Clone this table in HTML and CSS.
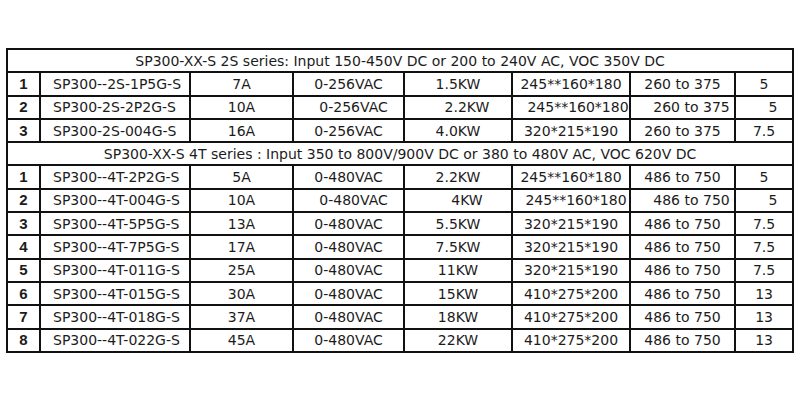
FILE: index.html
```html
<!DOCTYPE html>
<html>
<head>
<meta charset="utf-8">
<link rel="stylesheet" href="styles.css">
</head>
<body>
<div class="page">
<table class="spec">
<colgroup>
<col class="c-no"><col class="c-model"><col class="c-amp"><col class="c-volt"><col class="c-kw"><col class="c-size"><col class="c-range"><col class="c-kg">
</colgroup>
<tbody>
<tr class="series"><td colspan="8">SP300-XX-S 2S series: Input 150-450V DC or 200 to 240V AC, VOC 350V DC</td></tr>
<tr><td class="no">1</td><td class="model">SP300--2S-1P5G-S</td><td>7A</td><td>0-256VAC</td><td>1.5KW</td><td>245**160*180</td><td>260 to 375</td><td>5</td></tr>
<tr class="shifted"><td class="no">2</td><td class="model">SP300-2S-2P2G-S</td><td>10A</td><td class="s1">0-256VAC</td><td class="s2">2.2KW</td><td class="s3">245**160*180</td><td class="s2">260 to 375</td><td class="s2">5</td></tr>
<tr><td class="no">3</td><td class="model">SP300-2S-004G-S</td><td>16A</td><td>0-256VAC</td><td>4.0KW</td><td>320*215*190</td><td>260 to 375</td><td>7.5</td></tr>
<tr class="series"><td colspan="8">SP300-XX-S 4T series : Input 350 to 800V/900V DC or 380 to 480V AC, VOC 620V DC</td></tr>
<tr><td class="no">1</td><td class="model">SP300--4T-2P2G-S</td><td>5A</td><td>0-480VAC</td><td>2.2KW</td><td>245**160*180</td><td>486 to 750</td><td>5</td></tr>
<tr class="shifted"><td class="no">2</td><td class="model">SP300--4T-004G-S</td><td>10A</td><td class="s1">0-480VAC</td><td class="s2">4KW</td><td class="s1">245**160*180</td><td class="s2">486 to 750</td><td class="s2">5</td></tr>
<tr><td class="no">3</td><td class="model">SP300--4T-5P5G-S</td><td>13A</td><td>0-480VAC</td><td>5.5KW</td><td>320*215*190</td><td>486 to 750</td><td>7.5</td></tr>
<tr><td class="no">4</td><td class="model">SP300--4T-7P5G-S</td><td>17A</td><td>0-480VAC</td><td>7.5KW</td><td>320*215*190</td><td>486 to 750</td><td>7.5</td></tr>
<tr><td class="no">5</td><td class="model">SP300--4T-011G-S</td><td>25A</td><td>0-480VAC</td><td>11KW</td><td>320*215*190</td><td>486 to 750</td><td>7.5</td></tr>
<tr><td class="no">6</td><td class="model">SP300--4T-015G-S</td><td>30A</td><td>0-480VAC</td><td>15KW</td><td>410*275*200</td><td>486 to 750</td><td>13</td></tr>
<tr><td class="no">7</td><td class="model">SP300--4T-018G-S</td><td>37A</td><td>0-480VAC</td><td>18KW</td><td>410*275*200</td><td>486 to 750</td><td>13</td></tr>
<tr><td class="no">8</td><td class="model">SP300--4T-022G-S</td><td>45A</td><td>0-480VAC</td><td>22KW</td><td>410*275*200</td><td>486 to 750</td><td>13</td></tr>
</tbody>
</table>
</div>
</body>
</html>
```

FILE: styles.css
```css
html, body {
  margin: 0;
  padding: 0;
  background: #ffffff;
}

.page {
  width: 800px;
  height: 400px;
  padding: 48px 0 0 6px;
  box-sizing: border-box;
}

.spec {
  border-collapse: collapse;
  table-layout: fixed;
  width: 786px;
  font-family: "DejaVu Sans", "Liberation Sans", sans-serif;
  font-size: 14px;
  color: #1c1c1c;
}

.c-no { width: 33px; }
.c-model { width: 150px; }
.c-amp { width: 103px; }
.c-volt { width: 111px; }
.c-kw { width: 108px; }
.c-size { width: 118px; }
.c-range { width: 105px; }
.c-kg { width: 58px; }

.spec td {
  border: 2px solid #111111;
  height: 21px;
  padding: 0;
  text-align: center;
  vertical-align: middle;
  line-height: 20px;
  white-space: nowrap;
  overflow: hidden;
}

.spec tr {
  height: 23.3px;
}

.spec td.no {
  font-weight: bold;
  font-family: "Liberation Sans", sans-serif;
  font-size: 15px;
}

.spec td.model {
  text-align: left;
  padding-left: 12px;
}

.spec td.s1 { padding-left: 10px; }
.spec td.s2 { padding-left: 18px; }
.spec td.s3 { padding-left: 14px; }
```
